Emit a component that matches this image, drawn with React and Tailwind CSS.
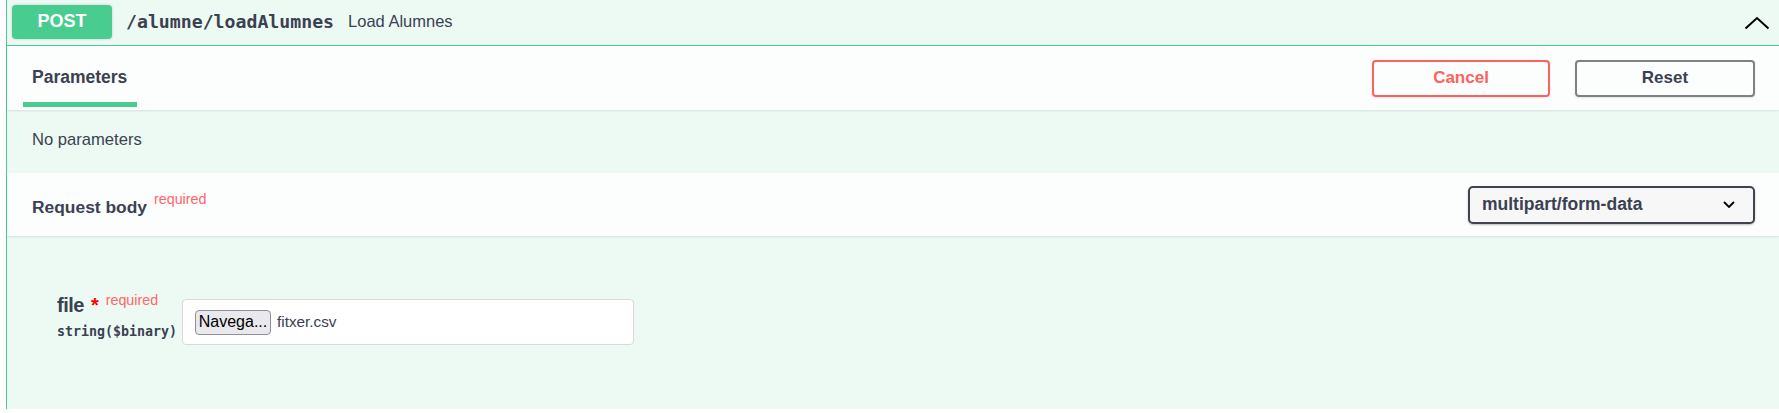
import React from "react";

export default function App() {
  return (
    <div className="w-[1779px] h-[413px] overflow-hidden bg-white pl-[6px] font-['Liberation_Sans',Arial,sans-serif] text-[#3b4151]">
      <div className="border-l border-[#49cc90] bg-[#edfaf4] h-[409px] flex flex-col">
        {/* summary header */}
        <div className="h-[46px] flex-none flex items-center border-b border-[#49cc90] pl-[5px] pr-[9px] pb-[2px]">
          <div className="w-[100px] h-[34px] rounded-[4px] bg-[#49cc90] text-white font-bold text-[18px] flex items-center justify-center shadow-[0_0_3px_rgba(0,0,0,0.19)]">
            POST
          </div>
          <span className="ml-[14px] font-['DejaVu_Sans_Mono',monospace] font-bold text-[18.2px] text-[#3b4151]">
            /alumne/loadAlumnes
          </span>
          <span className="ml-[14px] text-[16.5px] text-[#3b4151]">Load Alumnes</span>
          <div className="flex-1" />
          <svg width="26" height="14" viewBox="0 0 26 14" className="mt-[2px]">
            <polyline points="1.5,12.5 13,2 24.5,12.5" fill="none" stroke="#000" strokeWidth="2" />
          </svg>
        </div>

        {/* tabs header */}
        <div className="h-[64px] flex-none flex items-center justify-between bg-[#fbfefd] shadow-[0_1px_2px_rgba(0,0,0,0.1)] pr-[24px] relative">
          <div className="ml-[16px] w-[114px] h-full flex flex-col">
            <div className="pt-[21px] pl-[9px] leading-[20px] text-[17.5px] font-bold">Parameters</div>
            <div className="flex-1" />
            <div className="h-[5px] bg-[#49cc90] mb-[3px]" />
          </div>
          <div className="flex items-center gap-[25px]">
            <button className="w-[178px] h-[37px] rounded-[4px] border-2 border-[#ff6060] text-[#ff6060] font-bold text-[17px] bg-transparent shadow-[0_1px_2px_rgba(0,0,0,0.1)]">
              Cancel
            </button>
            <button className="w-[180px] h-[37px] rounded-[4px] border-2 border-[#808080] text-[#3b4151] font-bold text-[17px] bg-transparent shadow-[0_1px_2px_rgba(0,0,0,0.1)]">
              Reset
            </button>
          </div>
        </div>

        {/* no parameters */}
        <div className="h-[63px] flex-none pl-[25px] pt-[20px]">
          <p className="text-[16.6px] leading-[20px]">No parameters</p>
        </div>

        {/* request body header */}
        <div className="h-[63px] flex-none flex items-center justify-between bg-[#fbfefd] shadow-[0_1px_2px_rgba(0,0,0,0.1)] pl-[25px] pr-[24px] relative">
          <div className="flex items-start pt-[4px]">
            <span className="text-[17.4px] font-bold leading-[22px]">Request body</span>
            <span className="ml-[7px] text-[14.3px] text-[#ff6666] leading-[16px] relative -top-[5px]">required</span>
          </div>
          <div className="w-[287px] h-[38px] rounded-[5px] border-2 border-[#41444e] bg-[#f7f7f7] shadow-[0_1px_2px_rgba(0,0,0,0.25)] flex items-center justify-between pl-[12px] pr-[18px]">
            <span className="text-[17.5px] font-bold text-[#3b4151]">multipart/form-data</span>
            <svg width="12" height="7" viewBox="0 0 12 7">
              <polyline points="1,1 6,6 11,1" fill="none" stroke="#000" strokeWidth="1.8" />
            </svg>
          </div>
        </div>

        {/* body */}
        <div className="flex-1 flex items-start pl-[50px] pt-[58px]">
          <div className="w-[125px] flex-none flex flex-col">
            <div className="flex items-start leading-[23px]">
              <span className="text-[20px] font-bold tracking-[-0.5px] text-[#3b4151]">file</span>
              <span className="ml-[7px] text-[20px] font-bold text-[#ff0000]">*</span>
              <span className="ml-[7px] text-[14.3px] leading-[16px] text-[#ff6666] relative -top-[2px]">required</span>
            </div>
            <div className="mt-[7px] font-['DejaVu_Sans_Mono',monospace] font-bold text-[13.3px] leading-[16px] text-[#3b4151]">
              string($binary)
            </div>
          </div>
          <div className="mt-[5px] w-[452px] h-[46px] rounded-[4px] border border-[#d9d9d9] bg-white flex items-center pl-[12px]">
            <div className="w-[76px] h-[25px] rounded-[4px] border border-[#8f8f9d] bg-[#e9e9ed] flex items-center justify-center text-[16px] text-black">
              Navega...
            </div>
            <span className="ml-[6px] text-[15.3px] text-[#3b4151]">fitxer.csv</span>
          </div>
        </div>
      </div>
    </div>
  );
}
